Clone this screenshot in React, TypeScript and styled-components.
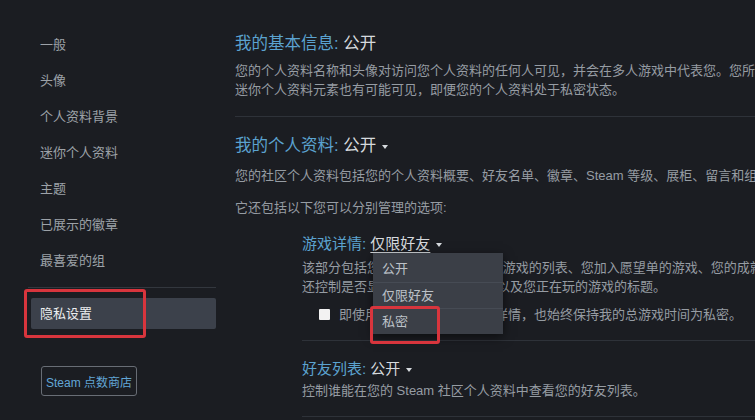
import React from "react";
import styled, { createGlobalStyle } from "styled-components";

const GlobalStyle = createGlobalStyle`
  body {
    margin: 0;
    background: #1b1d22;
    overflow: hidden;
    font-family: "Liberation Sans", "Noto Sans CJK SC", sans-serif;
  }
`;

const SPage = styled.div`
  display: flex;
  width: 755px;
  height: 420px;
  overflow: hidden;
  background: #1b1d22;
`;

const SSidebar = styled.nav`
  width: 216px;
  flex-shrink: 0;
  box-sizing: border-box;
  padding: 27px 0 0 31px;
  display: flex;
  flex-direction: column;
`;

const SNavItem = styled.div`
  height: 36px;
  line-height: 36px;
  padding-left: 9px;
  font-size: 13px;
  color: #9da2a8;
`;

const SNavDivider = styled.div`
  height: 1px;
  background: #33373e;
  margin: 8px 0 10px -3px;
`;

const SActiveItem = styled.div`
  position: relative;
  height: 31px;
  line-height: 31px;
  padding-left: 9px;
  font-size: 13px;
  color: #eceef0;
  background: #3c414b;
  border-radius: 2px;
`;

interface IMarkProps {
    left: number;
    top: number;
    w: number;
    h: number;
}

const SRedMark = styled.div<IMarkProps>`
  position: absolute;
  left: ${p => p.left}px;
  top: ${p => p.top}px;
  width: ${p => p.w}px;
  height: ${p => p.h}px;
  box-sizing: border-box;
  border: 3px solid #d8353d;
  border-radius: 3px;
  pointer-events: none;
  z-index: 5;
`;

const SStoreButton = styled.div`
  margin: 37px 0 0 10px;
  width: 96px;
  height: 30px;
  box-sizing: border-box;
  border: 1px solid #686d75;
  border-radius: 3px;
  display: flex;
  align-items: center;
  justify-content: center;
  font-size: 12px;
  color: #62a6d6;
`;

const SMain = styled.main`
  flex: 1;
  min-width: 0;
  padding: 32px 0 0 19px;
`;

interface ISection {
    gap?: number;
}

const SSection = styled.section<ISection>`
  margin-top: ${p => p.gap || 0}px;
`;

const STitle = styled.div`
  font-size: 16.5px;
  line-height: 22px;
  color: #5ba3d0;
  white-space: nowrap;
`;

const SSubTitle = styled.div`
  position: relative;
  font-size: 15px;
  line-height: 20px;
  color: #5ba3d0;
  white-space: nowrap;
`;

interface IValue {
    underline?: boolean;
}

const SValue = styled.span<IValue>`
  color: #d6dade;
  text-decoration: ${p => (p.underline ? "underline" : "none")};
  text-underline-offset: 3px;
`;

const SCaret = styled.span`
  display: inline-block;
  margin-left: 6px;
  vertical-align: middle;
  border-left: 3px solid transparent;
  border-right: 3px solid transparent;
  border-top: 4px solid #d6dade;
`;

interface IDesc {
    gap?: number;
}

const SDesc = styled.p<IDesc>`
  margin: ${p => p.gap || 0}px 0 0;
  font-size: 13px;
  line-height: 19px;
  color: #969ca3;
  white-space: nowrap;
`;

const SDivider = styled.div<IDesc>`
  height: 1px;
  background: #2e3239;
  margin-top: ${p => p.gap || 0}px;
  width: 700px;
`;

const SSubSection = styled.div`
  padding-left: 67px;
  margin-top: 17px;
`;

const SCheckRow = styled.label`
  display: flex;
  align-items: center;
  gap: 9px;
  margin-top: 9px;
  padding-left: 17px;
  font-size: 13px;
  line-height: 19px;
  color: #969ca3;
  white-space: nowrap;
`;

const SCheckbox = styled.span`
  width: 11px;
  height: 11px;
  background: #f2f2f2;
  border-radius: 1px;
  flex-shrink: 0;
`;

const SDropdown = styled.ul`
  position: absolute;
  left: 71px;
  top: 19px;
  width: 130px;
  margin: 0;
  padding: 3px 0 0;
  list-style: none;
  background: #3b3f47;
  box-shadow: 0 3px 10px rgba(0, 0, 0, 0.55);
  z-index: 3;
`;

const SDropItem = styled.li`
  position: relative;
  height: 26px;
  line-height: 26px;
  padding-left: 9px;
  font-size: 13px;
  color: #bcc1c7;
  & + & {
    border-top: 1px solid #464b54;
    height: 25px;
    line-height: 25px;
  }
`;

const sideItems = ["一般", "头像", "个人资料背景", "迷你个人资料", "主题", "已展示的徽章", "最喜爱的组"];

const App = () => {
    return (
        <SPage>
            <GlobalStyle />
            <SSidebar>
                {sideItems.map(item => (
                    <SNavItem key={item}>{item}</SNavItem>
                ))}
                <SNavDivider />
                <SActiveItem>
                    隐私设置
                    <SRedMark left={-7} top={-9} w={122} h={49} />
                </SActiveItem>
                <SStoreButton>Steam 点数商店</SStoreButton>
            </SSidebar>

            <SMain>
                <SSection>
                    <STitle>
                        我的基本信息: <SValue>公开</SValue>
                    </STitle>
                    <SDesc gap={7}>
                        您的个人资料名称和头像对访问您个人资料的任何人可见，并会在多人游戏中代表您。您所在的群组与部分
                        <br />
                        迷你个人资料元素也有可能可见，即便您的个人资料处于私密状态。
                    </SDesc>
                    <SDivider gap={17} />
                </SSection>

                <SSection gap={17}>
                    <STitle>
                        我的个人资料: <SValue>公开</SValue>
                        <SCaret />
                    </STitle>
                    <SDesc gap={10}>
                        您的社区个人资料包括您的个人资料概要、好友名单、徽章、Steam 等级、展柜、留言和组成员身份。
                    </SDesc>
                    <SDesc gap={13}>它还包括以下您可以分别管理的选项:</SDesc>

                    <SSubSection>
                        <SSubTitle>
                            游戏详情: <SValue underline>仅限好友</SValue>
                            <SCaret />
                            <SDropdown>
                                <SDropItem>公开</SDropItem>
                                <SDropItem>仅限好友</SDropItem>
                                <SDropItem>
                                    私密
                                    <SRedMark left={-3} top={-3} w={70} h={38} />
                                </SDropItem>
                            </SDropdown>
                        </SSubTitle>
                        <SDesc gap={4}>
                            该部分包括您在 Steam 上所拥有的游戏的列表、您加入愿望单的游戏、您的成就和游戏时间。此设置
                            <br />
                            还控制是否显示您正在游戏的状态以及您正在玩的游戏的标题。
                        </SDesc>
                        <SCheckRow>
                            <SCheckbox />
                            即使用户可以查看我的游戏详情，也始终保持我的总游戏时间为私密。
                        </SCheckRow>
                        <SDivider gap={16} />

                        <SSubTitle style={{ marginTop: 18 }}>
                            好友列表: <SValue>公开</SValue>
                            <SCaret />
                        </SSubTitle>
                        <SDesc gap={2}>控制谁能在您的 Steam 社区个人资料中查看您的好友列表。</SDesc>
                        <SDivider gap={16} />
                    </SSubSection>
                </SSection>
            </SMain>
        </SPage>
    );
};

export default App;
